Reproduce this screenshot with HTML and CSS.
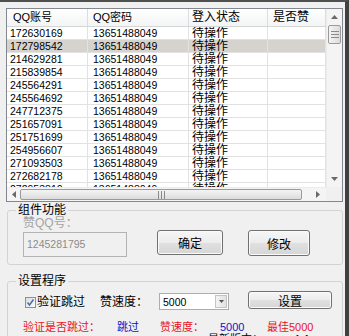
FILE: index.html
```html
<!DOCTYPE html>
<html lang="zh-CN">

<head>
  <meta charset="UTF-8">
  <title>QQ赞</title>
  <link rel="stylesheet" href="styles.css">
</head>

<body>
  <div class="window">
    <!-- 账号列表 -->
    <div class="list">
      <div class="list-main">
        <div class="list-head">
          <div class="head-cell">QQ账号</div>
          <div class="head-cell">QQ密码</div>
          <div class="head-cell">登入状态</div>
          <div class="head-cell">是否赞</div>
        </div>
        <div class="list-body">
          <div class="row"><div class="cell">172630169</div><div class="cell">13651488049</div><div class="cell zh">待操作</div><div class="cell"></div></div>
          <div class="row selected"><div class="cell">172798542</div><div class="cell">13651488049</div><div class="cell zh">待操作</div><div class="cell"></div></div>
          <div class="row"><div class="cell">214629281</div><div class="cell">13651488049</div><div class="cell zh">待操作</div><div class="cell"></div></div>
          <div class="row"><div class="cell">215839854</div><div class="cell">13651488049</div><div class="cell zh">待操作</div><div class="cell"></div></div>
          <div class="row"><div class="cell">245564291</div><div class="cell">13651488049</div><div class="cell zh">待操作</div><div class="cell"></div></div>
          <div class="row"><div class="cell">245564692</div><div class="cell">13651488049</div><div class="cell zh">待操作</div><div class="cell"></div></div>
          <div class="row"><div class="cell">247712375</div><div class="cell">13651488049</div><div class="cell zh">待操作</div><div class="cell"></div></div>
          <div class="row"><div class="cell">251657091</div><div class="cell">13651488049</div><div class="cell zh">待操作</div><div class="cell"></div></div>
          <div class="row"><div class="cell">251751699</div><div class="cell">13651488049</div><div class="cell zh">待操作</div><div class="cell"></div></div>
          <div class="row"><div class="cell">254956607</div><div class="cell">13651488049</div><div class="cell zh">待操作</div><div class="cell"></div></div>
          <div class="row"><div class="cell">271093503</div><div class="cell">13651488049</div><div class="cell zh">待操作</div><div class="cell"></div></div>
          <div class="row"><div class="cell">272682178</div><div class="cell">13651488049</div><div class="cell zh">待操作</div><div class="cell"></div></div>
          <div class="row"><div class="cell">272953810</div><div class="cell">13651488049</div><div class="cell zh">待操作</div><div class="cell"></div></div>
        </div>
      </div>

      <div class="vscroll">
        <div class="sb-btn">
          <svg width="7" height="4" viewBox="0 0 7 4"><polygon points="0,4 3.5,0 7,4" fill="#6a6a6a"/></svg>
        </div>
        <div class="v-thumb">
          <svg width="8" height="7" viewBox="0 0 8 7"><path d="M0 0.5H8M0 3.5H8M0 6.5H8" stroke="#8a8a8a"/></svg>
        </div>
        <div class="sb-track"></div>
        <div class="sb-btn">
          <svg width="7" height="4" viewBox="0 0 7 4"><polygon points="0,0 3.5,4 7,0" fill="#6a6a6a"/></svg>
        </div>
      </div>

      <div class="hscroll">
        <div class="sb-btn h-left">
          <svg width="4" height="7" viewBox="0 0 4 7"><polygon points="4,0 0,3.5 4,7" fill="#6a6a6a"/></svg>
        </div>
        <div class="h-thumb">
          <svg width="7" height="8" viewBox="0 0 7 8"><path d="M0.5 0V8M3.5 0V8M6.5 0V8" stroke="#8a8a8a"/></svg>
        </div>
        <div class="sb-track"></div>
        <div class="sb-btn h-right">
          <svg width="4" height="7" viewBox="0 0 4 7"><polygon points="0,0 4,3.5 0,7" fill="#6a6a6a"/></svg>
        </div>
      </div>
      <div class="corner"></div>
    </div>

    <!-- 组件功能 -->
    <fieldset class="group group-func">
      <legend>组件功能</legend>
      <div class="func">
        <div class="qq-field">
          <div class="dim-label">赞QQ号：</div>
          <div class="textbox">1245281795</div>
        </div>
        <button class="btn btn-ok">确定</button>
        <button class="btn btn-edit">修改</button>
      </div>
    </fieldset>

    <!-- 设置程序 -->
    <fieldset class="group group-set">
      <legend>设置程序</legend>
      <div class="settings-row">
        <span class="checkbox">
          <svg width="11" height="11" viewBox="0 0 11 11"><path d="M2.5 5.5L4.5 8L8.5 2.5" stroke="#4f6fa8" stroke-width="1.6" fill="none"/></svg>
        </span>
        <span class="check-label">验证跳过</span>
        <span class="speed-label">赞速度：</span>
        <div class="select">
          <span>5000</span>
          <span class="drop-btn">
            <svg width="5" height="3" viewBox="0 0 5 3"><polygon points="0,0 2.5,3 5,0" fill="#555"/></svg>
          </span>
        </div>
        <button class="btn btn-set">设置</button>
      </div>
      <div class="status">
        <span class="red">验证是否跳过：</span>
        <span class="blue">跳过</span>
        <span class="red">赞速度：</span>
        <span class="blue">5000</span>
        <span class="red">最佳5000</span>
      </div>
      <div class="version">最新版本：<span class="ver-num">v1.1</span></div>
    </fieldset>
  </div>
</body>

</html>
```

FILE: styles.css
```css
* {
  margin: 0;
  padding: 0;
  box-sizing: border-box;
}

body {
  width: 349px;
  height: 336px;
  overflow: hidden;
  background: #f0f0f0;
  font-family: "Liberation Sans", "Noto Sans CJK SC", sans-serif;
  font-size: 12px;
  color: #000;
}

.window {
  width: 349px;
  height: 336px;
  overflow: hidden;
  border-top: 2px solid #505050;
  border-right: 4px solid #404040;
  padding-top: 6px;
}

/* 列表 */
.list {
  margin-left: 6px;
  width: 337px;
  height: 194px;
  border: 1px solid #828790;
  background: #fff;
  display: grid;
  grid-template-columns: 1fr 16px;
  grid-template-rows: 1fr 14px;
}

.list-main {
  overflow: hidden;
}

.list-head,
.row {
  display: grid;
  grid-template-columns: 81px 101px 79px 1fr;
}

.list-head {
  height: 18px;
  background: linear-gradient(#ffffff, #f3f4f5);
  border-bottom: 1px solid #d5d5d5;
}

.head-cell {
  border-right: 1px solid #dcdde0;
  padding-left: 5px;
  line-height: 17px;
  font-size: 11px;
}

.head-cell:first-child {
  padding-left: 6px;
}

.head-cell:nth-child(3) {
  padding-left: 3px;
  font-size: 12px;
}

.head-cell:nth-child(4) {
  font-size: 12px;
}

.list-body {
  height: 160px;
  overflow: hidden;
}

.row {
  height: 13px;
}

.row.selected {
  background: #d6d3ce;
}

.cell {
  border-right: 1px solid #e2e2e2;
  border-bottom: 1px solid #e2e2e2;
  padding-left: 3px;
  font-size: 10.5px;
  line-height: 12px;
  white-space: nowrap;
}

.cell:nth-child(2) {
  padding-left: 5px;
}

.cell.zh {
  font-size: 12px;
}

/* 滚动条 */
.vscroll {
  grid-row: 1 / 2;
  grid-column: 2 / 3;
  display: flex;
  flex-direction: column;
  background: #f4f4f4;
  border-left: 1px solid #ececec;
}

.sb-btn {
  display: flex;
  justify-content: center;
  align-items: center;
  height: 16px;
}

.sb-track {
  flex: 1;
}

.v-thumb {
  height: 19px;
  margin: 0 1px;
  border: 1px solid #9a9a9a;
  border-radius: 2px;
  background: linear-gradient(90deg, #f4f4f4, #dcdcdc);
  display: flex;
  justify-content: center;
  align-items: center;
}

.hscroll {
  display: flex;
  background: #f4f4f4;
  border-top: 1px solid #ececec;
}

.h-left {
  width: 13px;
  height: auto;
}

.h-right {
  width: 16px;
  height: auto;
}

.h-thumb {
  width: 282px;
  margin: 1px 0;
  border: 1px solid #9a9a9a;
  border-radius: 2px;
  background: linear-gradient(#f4f4f4, #dcdcdc);
  display: flex;
  justify-content: center;
  align-items: center;
}

.hscroll .sb-track {
  flex: 1;
}

.corner {
  background: #f0f0f0;
}

/* 分组框 */
.group {
  margin-left: 7px;
  width: 336px;
  border: 1px solid #d3d3d3;
  border-radius: 3px;
  padding: 0 8px 7px;
}

.group legend {
  padding: 0 2px 2px;
  font-size: 12px;
  line-height: 12px;
  font-family: "Noto Sans CJK SC", sans-serif;
}

.group-func {
  margin-top: 1px;
}

.group-set {
  margin-top: 9px;
}

.func {
  display: flex;
  align-items: flex-end;
  padding-left: 7px;
}

.dim-label {
  color: #a3a3a3;
  line-height: 12px;
}

.textbox {
  margin-top: 3px;
  width: 104px;
  height: 25px;
  border: 1px solid #b3b3b3;
  color: #8c8c8c;
  font-size: 10.5px;
  line-height: 23px;
  padding-left: 3px;
}

/* 按钮 */
.btn {
  font-family: "Liberation Sans", "Noto Sans CJK SC", sans-serif;
  font-size: 12px;
  color: #000;
  border: 1px solid #707070;
  border-radius: 3px;
  background: linear-gradient(#f6f6f6 0%, #ececec 50%, #e0e0e0 51%, #d6d6d6 100%);
  box-shadow: inset 0 0 0 1px #fbfbfb;
}

.btn-ok {
  width: 66px;
  height: 25px;
  margin-left: 30px;
  margin-bottom: 2px;
}

.btn-edit {
  width: 62px;
  height: 26px;
  margin-left: 25px;
  margin-bottom: 1px;
}

/* 设置行 */
.settings-row {
  display: flex;
  align-items: flex-start;
  height: 21px;
  margin-top: 2px;
  padding-left: 9px;
}

.checkbox {
  width: 11px;
  height: 11px;
  margin-top: 7px;
  border: 1px solid #8e8f8f;
  background: linear-gradient(135deg, #dcdcdc, #fbfbfb);
  display: flex;
}

.checkbox svg {
  margin: -1px;
}

.check-label {
  margin-left: 1px;
  margin-top: 6px;
  line-height: 12px;
}

.speed-label {
  margin-left: 15px;
  margin-top: 6px;
  line-height: 12px;
}

.select {
  margin-left: 11px;
  margin-top: 3px;
  width: 70px;
  height: 17px;
  border: 1px solid #abadb3;
  background: #fff;
  display: flex;
  justify-content: space-between;
  align-items: center;
  padding: 1px 1px 1px 3px;
  font-size: 10.5px;
}

.drop-btn {
  width: 12px;
  height: 13px;
  border: 1px solid #c4c4c4;
  background: linear-gradient(90deg, #f3f3f3, #e1e1e1);
  display: flex;
  justify-content: center;
  align-items: center;
}

.btn-set {
  width: 84px;
  height: 18px;
  margin-left: 19px;
  margin-top: 1px;
}

/* 状态 */
.status {
  display: grid;
  grid-template-columns: 94px 43px 60px 47px auto;
  margin-top: 10px;
  padding-left: 7px;
  font-size: 11px;
  line-height: 12px;
}

.red {
  color: #e8141c;
}

.blue {
  color: #1010c8;
}

.version {
  margin-left: 192px;
  font-size: 11px;
  line-height: 12px;
}

.ver-num {
  margin-left: 26px;
}
```
